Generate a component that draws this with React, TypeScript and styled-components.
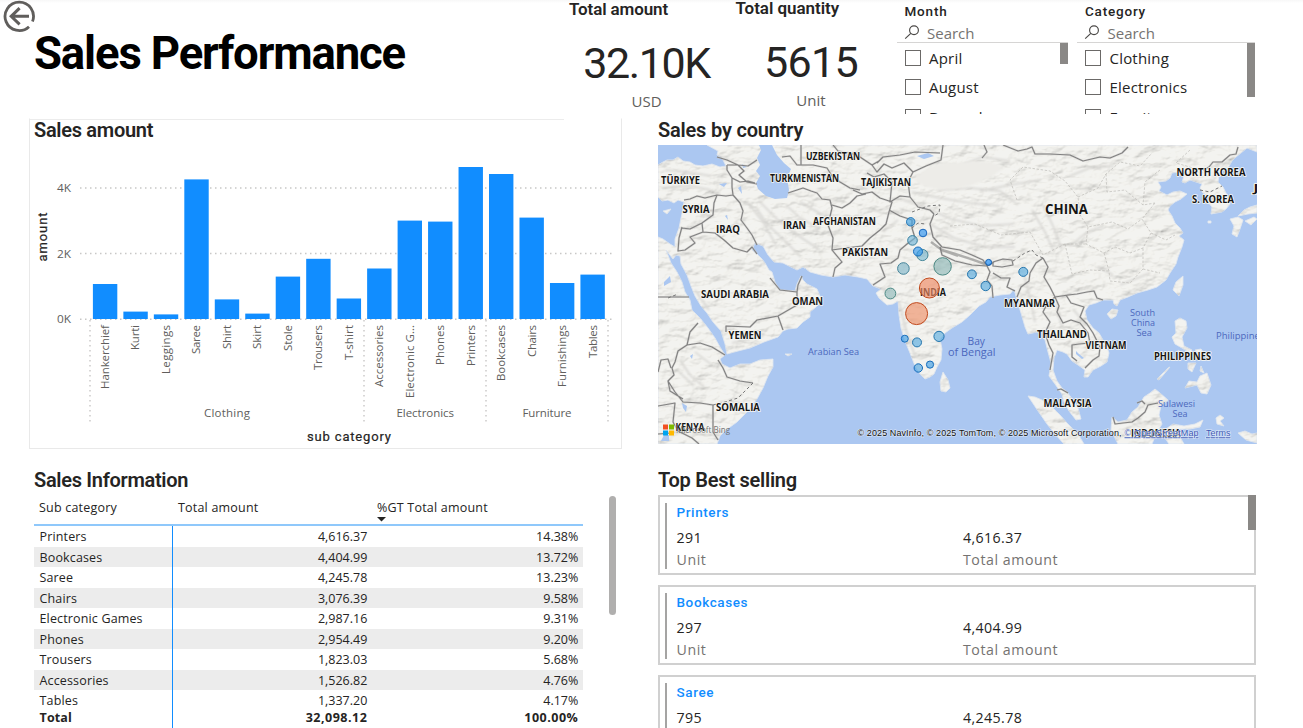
import React from "react";
import styled, { createGlobalStyle } from "styled-components";

const DIN = `Roboto, "Liberation Sans", sans-serif`;
const UI = `"Open Sans", "Noto Sans", sans-serif`;

const Global = createGlobalStyle`
  html, body { margin: 0; background: #fff; overflow: hidden; }
  * { box-sizing: border-box; }
`;

const Page = styled.main`
  position: relative;
  width: 1303px;
  height: 728px;
  overflow: hidden;
  background: linear-gradient(#f7f7f7, #fff 3px);
  color: #252423;
  font-family: ${UI};
`;

const BackButton = styled.svg`
  position: absolute;
  left: 3px;
  top: 0;
  width: 34px;
  height: 33px;
`;

const Header = styled.header`
  display: flex;
  height: 114px;
  overflow: hidden;
`;

const Title = styled.h1`
  margin: 0;
  padding: 26px 0 0 34px;
  width: 569px;
  font: 700 45.5px/56px ${DIN};
  letter-spacing: -1.15px;
  color: #000;
  white-space: nowrap;
`;

const Kpi = styled.section<{ $w: number; $up: number }>`
  width: ${(p) => p.$w}px;
  margin-top: ${(p) => -p.$up}px;
`;

const KpiTitle = styled.h2<{ $ls: number }>`
  margin: 0;
  font: 600 17px/20px ${DIN};
  letter-spacing: ${(p) => p.$ls}px;
  white-space: nowrap;
`;

const KpiValue = styled.div<{ $w: number; $ls: number }>`
  width: ${(p) => p.$w}px;
  padding-top: 17px;
  font: 450 43px/54px ${DIN};
  letter-spacing: ${(p) => p.$ls}px;
  text-align: center;
  white-space: nowrap;
`;

const KpiUnit = styled.div<{ $w: number }>`
  width: ${(p) => p.$w}px;
  font-size: 15px;
  line-height: 23px;
  text-align: center;
  color: #605e5c;
`;

const Slicer = styled.section<{ $w: number; $gap: number }>`
  width: ${(p) => p.$w}px;
  margin-left: ${(p) => p.$gap}px;
`;

const SlicerTitle = styled.h3`
  margin: 0;
  padding: 3px 0 0 8px;
  font: 500 13.5px/17px ${DIN};
  letter-spacing: 0.8px;
`;

const SearchBox = styled.div`
  display: flex;
  align-items: center;
  gap: 6.5px;
  height: 23px;
  padding: 4px 0 0 7px;
  border-bottom: 1px solid #d6d5d4;
  font-size: 15px;
  line-height: 18px;
  color: #757371;
`;

const SlicerBody = styled.div`
  display: flex;
  justify-content: space-between;
`;

const Options = styled.div`
  display: flex;
  flex-direction: column;
  padding: 0 0 0 8px;
`;

const Option = styled.label`
  display: flex;
  align-items: center;
  gap: 8.5px;
  height: 29.5px;
  font-size: 15px;
  letter-spacing: 0.2px;
  white-space: nowrap;
`;

const Box = styled.span`
  width: 16px;
  height: 16px;
  border: 1px solid #6b6967;
`;

const Thumb = styled.i<{ $h: number }>`
  width: 8px;
  height: ${(p) => p.$h}px;
  background: #8a8886;
`;

const Board = styled.div`
  display: grid;
  grid-template-columns: 593px 599px;
  grid-template-rows: 345px auto;
  column-gap: 36px;
  padding: 4px 0 0 29px;
`;

const Panel = styled.section<{ $pad?: number }>`
  padding-left: ${(p) => p.$pad ?? 0}px;
`;

const ChartPanel = styled.section`
  height: 331px;
  border: 1px solid #e9e9e9;
  border-top-color: transparent;
  background: linear-gradient(#ececec, #ececec) 0 0 / 534px 1px no-repeat;
`;

const PanelTitle = styled.h2<{ $x?: number; $y?: number; $ls?: number }>`
  margin: 0;
  padding: ${(p) => p.$y ?? 0}px 0 0 ${(p) => p.$x ?? 0}px;
  font: 600 20px/24px ${DIN};
  letter-spacing: ${(p) => p.$ls ?? -0.3}px;
  white-space: nowrap;
`;

const ChartTitle = styled(PanelTitle)`
  margin-top: -1px;
`;

const Plot = styled.svg`
  display: block;
  margin-top: 2px;
  font-family: ${UI};
`;

const MapCanvas = styled.svg`
  display: block;
  margin-top: 3px;
`;

const TableArea = styled.div`
  display: flex;
  justify-content: space-between;
  width: 582px;
`;

const Table = styled.div`
  width: 549px;
  font-size: 12.5px;
  line-height: 20px;
`;

const HeadRow = styled.div`
  display: grid;
  grid-template-columns: 138px 200px 211px;
  height: 34px;
  padding-top: 6px;
  border-bottom: 2px solid #8fc8fb;
`;

const Head = styled.div<{ $x?: number }>`
  padding-left: ${(p) => p.$x ?? 5}px;
  letter-spacing: 0.2px;
  white-space: nowrap;
`;

const SortMark = styled.svg`
  display: block;
  margin-top: -1px;
`;

const Row = styled.div<{ $alt?: boolean; $total?: boolean }>`
  display: grid;
  grid-template-columns: 139px 199px 211px;
  height: ${(p) => (p.$total ? 24 : 20.5)}px;
  margin-top: ${(p) => (p.$total ? -3.5 : 0)}px;
  line-height: 21px;
  font-weight: ${(p) => (p.$total ? 700 : 400)};
  letter-spacing: ${(p) => (p.$total ? 0.5 : 0)}px;
  background: ${(p) => (p.$alt ? "#ececec" : "transparent")};
`;

const NameCell = styled.div`
  padding-left: 5.5px;
  border-right: 1px solid #118dff;
  letter-spacing: 0.15px;
  white-space: nowrap;
`;

const NumCell = styled.div`
  padding-right: 4.7px;
  text-align: right;
`;

const TableThumb = styled.i`
  width: 7px;
  height: 119px;
  margin-top: 4px;
  border-radius: 4px;
  background: #b0afae;
`;

const CardList = styled.div`
  position: relative;
  display: flex;
  flex-direction: column;
  gap: 10px;
  padding-top: 3px;
`;

const ListThumb = styled.i`
  position: absolute;
  top: 3px;
  right: 1px;
  width: 8px;
  height: 35px;
  background: #8a8886;
`;

const Card = styled.article`
  height: 80px;
  width: 598px;
  padding: 6px 0 0 5px;
  border: 2px solid #d0d0d0;
`;

const CardInner = styled.div`
  height: 66px;
  border-left: 2px solid #a5a4a3;
  padding-left: 9.5px;
`;

const CardName = styled.h3`
  margin: 0;
  font: 500 13.5px/18px ${DIN};
  letter-spacing: 0.6px;
  color: #118dff;
`;

const CardGrid = styled.div`
  display: grid;
  grid-template-columns: 286.5px auto;
  padding-top: 6px;
  font-size: 14.2px;
  line-height: 22px;
  letter-spacing: 0.4px;
`;

const Muted = styled.span`
  letter-spacing: 0.55px;
  color: #757371;
`;

const bars: [string, number][] = [
  ["Hankerchief", 284], ["Kurti", 311.6], ["Leggings", 314.4], ["Saree", 179.4],
  ["Shirt", 299.4], ["Skirt", 313.6], ["Stole", 276.6], ["Trousers", 258.8],
  ["T-shirt", 298.5], ["Accessories", 268.5], ["Electronic G...", 220.6],
  ["Phones", 221.6], ["Printers", 167], ["Bookcases", 174], ["Chairs", 217.6],
  ["Furnishings", 283], ["Tables", 274.6],
];
const barLabelLengths = [64, 25, 49, 29, 24, 24, 26, 45, 35, 62, 73, 40, 41, 56, 32, 62, 33];

const Chart = () => (
  <Plot width="591" height="303" viewBox="30 144 591 303">
    <g stroke="#c8c7c6" strokeDasharray="1.5 3.5" strokeWidth="1.4">
      {[188, 253.5, 319.3].map((y) => (
        <path key={y} d={`M80 ${y}H613`} />
      ))}
      {[90, 364, 486, 608].map((x) => (
        <path key={x} d={`M${x} 320V424`} />
      ))}
    </g>
    <g fontSize="11.5" fill="#605e5c">
      {([["4K", 192], ["2K", 257.5], ["0K", 323]] as [string, number][]).map(([t, y]) => (
        <text key={t} x="71" y={y} textAnchor="end" textLength="14" lengthAdjust="spacingAndGlyphs">{t}</text>
      ))}
      {bars.map(([name, top], i) => (
        <React.Fragment key={name}>
          <rect x={92.9 + i * 30.47} y={top} width="24.4" height={319 - top} fill="#118dff" />
          <text
            transform={`translate(${109 + i * 30.47} 325) rotate(-90)`}
            textAnchor="end"
            textLength={barLabelLengths[i]}
          >{name}</text>
        </React.Fragment>
      ))}
      <text x="204" y="417" textLength="46">Clothing</text>
      <text x="396.5" y="417" textLength="57.5">Electronics</text>
      <text x="522.5" y="417" textLength="49">Furniture</text>
    </g>
    <g fontFamily={DIN} fontWeight="450" fontSize="13" fill="#252423" stroke="#252423" strokeWidth="0.2">
      <text x="307" y="441" textLength="84">sub category</text>
      <text transform="translate(47 261.5) rotate(-90)" textLength="49">amount</text>
    </g>
  </Plot>
);

const mainland =
  "M658 165L663 162 667 160 673 160 678 157 683 161 690 162 695 165 703 166 712 164 720 167 726 166 722 158 717 155 718 151 707 145H1257V152L1252 150 1247 148 1241 153 1236 157 1232 161 1228 168 1222 171 1219 175 1218 182 1223 187 1227 195 1230 204 1226 209 1222 212 1211 214 1212 207 1208 202 1210 197 1203 193 1200 188 1202 184 1196 182 1190 180 1185 183 1182 182 1184 176 1179 172 1172 173 1170 178 1166 181 1158 182 1161 187 1159 191 1167 195 1173 192 1180 191 1187 194 1181 199 1175 202 1170 206 1168 210 1172 216 1175 223 1180 228 1183 233 1179 236 1184 240 1182 247 1178 257 1176 264 1170 273 1166 280 1157 287 1148 290 1137 293 1128 297 1120 300 1117 306 1114 304 1113 300 1103 300 1096 303 1089 305 1085 311 1087 320 1093 328 1099 333 1103 340 1107 347 1109 353 1107 362 1101 366 1093 370 1088 377 1084 377 1085 370 1078 365 1072 361 1067 354 1063 352 1057 350 1054 358 1053 370 1057 381 1062 388 1067 392 1073 400 1078 408 1081 419 1076 420 1069 411 1064 402 1062 394 1055 384 1049 376 1051 363 1048 352 1045 340 1043 330 1037 332 1028 334 1025 327 1021 313 1017 300 1014 289 1010 294 1000 295 990 297 986 302 979 306 970 315 962 322 952 328 945 333 940 339 942 349 941 360 937 367 934 374 930 377 925 379 920 374 915 366 910 353 905 341 901 328 899 315 898 301 893 304 887 305 879 298 876 293 881 289 873 286 867 279 858 277 845 275 833 277 821 275 810 272 803 267 797 270 783 263 774 262 768 255 763 246 755 243 752 250 757 254 762 259 765 263 769 270 772 272 775 282 779 290 795 291 797 284 801 276 803 280 807 284 817 289 822 301 816 307 810 312 810 317 803 322 797 328 788 329 783 331 778 337 764 342 750 348 738 351 727 354 725 344 721 331 713 322 707 313 701 306 695 296 691 286 687 275 681 264 680 256 676 255 673 259 666 250 671 263 677 272 682 282 685 292 690 300 692 310 700 318 708 328 715 338 720 347 725 355 720 359 722 364 730 368 740 364 750 364 760 360 773 359 773 367 768 376 763 388 757 399 748 411 737 422 726 430 720 436 717 444H658V237L663 239 670 244 675 247 675 239 679 228 681 218 683 209 684 202 678 200 674 203 668 200 662 201 658 197Z";

const islands =
  "M1028 396L1035 397 1042 400 1052 407 1060 415 1067 423 1078 434 1084 444H1064L1055 434 1047 424 1038 411Z" +
  "M1112 417L1118 422 1127 420 1132 412 1138 407 1144 397 1150 393 1155 389 1160 393 1168 400 1161 406 1159 415 1162 424 1156 434 1152 444H1118L1111 430Z" +
  "M1166 429L1173 424 1184 426 1195 424 1203 420 1200 427 1190 429 1176 429 1172 433 1185 433 1180 437 1184 444H1169L1165 438Z" +
  "M1220 415L1224 418 1220 421 1224 426 1217 424 1216 418ZM1238 433L1245 431 1252 434 1257 433V443L1246 440Z" +
  "M1175 321L1180 318 1186 321 1187 328 1182 337 1184 346 1192 350 1190 353 1182 348 1175 344 1172 337 1176 333Z" +
  "M1185 388L1189 381 1197 382 1200 376 1207 373 1211 385 1207 394 1201 393 1197 385Z" +
  "M1195 350L1201 349 1206 356 1202 358ZM1188 363L1196 363 1192 372 1188 369ZM1201 366L1204 373 1200 371ZM1157 379L1168 368 1170 367 1159 380ZM1178 350L1183 354 1180 357Z" +
  "M1183 276L1183 285 1179 296 1173 290 1176 282ZM1107 314L1112 309 1118 310 1116 316 1111 319Z" +
  "M943 372L948 380 950 388 946 392 941 391 940 382Z" +
  "M1230 219L1238 217 1243 220 1240 229 1237 237 1232 234 1234 226ZM1238 216L1244 210 1250 207 1257 205V213L1248 214ZM1245 221L1254 217 1257 219 1251 225Z" +
  "M663 211L671 209 667 214ZM785 354L792 354 788 356ZM1208 221h3v2h-3Z";

const water =
  "M759 145L761 150 757 158 760 165 756 171 760 176 756 183 758 189 766 196 775 199 787 198 789 190 787 178 791 169 784 163 777 155 772 145ZM917 156L928 153 934 156 924 159ZM719 184l8-1-3 4ZM738 188l3-2 1 8ZM725 216l2-1 1 5ZM682 403l5 3-1 6-3-4ZM664 282l6-6 1 6-7 4ZM1076 351l3 3 5 4-2 1-6-5ZM805 268l3 4-3 1ZM742 164l5 3-4 1ZM690 356l3-2-1 5ZM664 435h5v6h-8Z";

const borders =
  "M684 200L690 199 697 196 705 198 717 195 726 196 733 195 732 187 732 178 727 170 727 165M717 157L727 160 738 165 748 166 757 160M727 165L738 165 744 171 739 175 747 182 757 184M732 178L740 182 748 181 755 183M733 195L740 203 743 211 741 220 747 228 752 235 757 245M717 195L714 203 713 215 702 223 690 229 682 228M702 223L703 232 715 233 724 240 733 248 747 252 752 247 757 254M703 232L690 237 695 243 685 250 678 251 679 238 682 227M770 278L775 284 780 290 797 292 798 285 802 276M797 292L797 305 778 316 757 320 750 327 726 326 726 332M778 316L783 330" +
  "M658 297H689M698 323L690 332 687 345 678 351 675 362 672 368 674 375 668 381 675 392 683 402 700 403 713 405 713 432 718 440M687 345L700 343 712 347 725 355M718 360L723 368 727 377 740 381 753 383M658 372L661 360 668 359 671 368M658 406L675 403 673 422 678 431 692 438 699 444M658 434L672 433M668 381L670 391 683 399" +
  "M788 193L803 188 811 191 817 193 822 199 830 200 832 208 828 225 833 238 832 250 842 262 835 268 833 277M782 157L790 156 797 165 813 165 827 168 832 176 840 182 850 188 860 190M832 205L842 208 850 203 857 196 866 194M801 145V165M833 145L838 151 850 153 860 157 872 165 879 161M832 250L846 248 862 246 870 238 880 230 886 224 889 212 892 202 880 198 872 192 862 194 853 190M867 173L874 177 884 174 892 182 890 202 900 196 910 197M872 165L877 172 884 164 892 168 904 163 913 172M877 163L883 157 900 155 915 152 940 153M943 145L941 160 926 166 913 172 908 182 910 197 918 207 930 210 934 214" +
  "M889 210L900 216 912 220 912 228 915 238 907 244 900 250 898 258 891 263 880 264 885 277 873 285M934 214L930 224 933 237 942 247 960 250 972 255 983 260 987 266 972 265 955 261 942 255 940 247M993 262L1003 259 1012 260 1013 265 1002 267 993 266ZM987 266L990 272 987 280 992 286 993 298M993 273L1001 278 1010 278 1007 287 1015 291M1030 273L1036 263 1043 258M1030 273L1029 281 1021 287 1017 297M987 266L994 262" +
  "M1043 258L1048 267 1044 277 1050 287 1055 297 1068 295 1077 294 1087 292 1094 291 1097 298 1103 300M1055 297L1047 304 1043 312 1050 322 1045 333 1049 345 1053 353 1050 370M1055 297L1059 306 1057 312 1063 323 1071 320 1080 323 1088 333 1090 343 1079 344 1072 345 1072 357 1077 361M1066 295L1071 303 1084 307 1080 317 1087 324 1093 333 1100 347 1099 356 1093 360 1085 368M1057 390L1061 389 1068 393" +
  "M1113 417L1115 424 1123 423 1132 422 1138 418 1145 412 1148 405 1158 403M1137 403l5-2 3 3M1003 145L1018 151 1027 149 1032 147 1035 154 1050 154 1070 155 1083 161 1100 157 1110 158 1122 153 1128 147M1203 170L1209 167 1213 162 1222 162 1230 155 1236 154 1238 147M984 145l3 7-5 6";

const ridges =
  "M760 202L778 220 797 235 820 250M756 208L768 225 784 240 801 257M786 205L800 218 820 229M748 203L763 222 776 245M800 202L821 214M665 170L688 172 711 176M662 188L690 186 711 190M883 232L898 220M912 192L940 198 970 203 1000 206M930 224L954 238 985 247 1015 247M920 205L951 219 981 226 1014 224M980 191L1010 185 1041 180M937 190L970 188 1000 191 1018 205M1032 210L1045 232 1054 252M1043 205L1054 228 1062 250M1070 176L1092 167 1114 166M1070 246L1085 234 1103 226M1098 267L1113 275M1120 285L1150 273M899 302L906 330 915 356M903 200L925 207M680 360L690 375 705 388M677 370L694 386M695 352L712 365M950 170L982 157 1010 161M1024 275L1031 302 1035 322M1056 305L1062 327M1073 309L1087 326M695 290L709 310M732 343L764 335M1125 405L1142 425";

const provinces =
  "M1017 200L1010 180 1023 167 1050 171 1065 181 1078 197 1080 215 1088 227 1112 222 1128 229 1142 219M1078 197L1098 188 1106 174 1120 162 1140 166 1152 153M1106 174L1107 192 1125 190 1143 205 1155 203M1088 227L1086 244 1104 253 1115 247 1130 253 1143 248 1151 233 1142 219 1155 203M1104 253L1109 271 1110 281 1130 283 1143 269 1143 248M1143 269L1160 273M1151 233L1166 240 1175 235M950 226L975 224 1001 235 1030 232 1043 255 1065 244 1086 244M1065 244L1072 274 1090 270 1109 271M1160 170L1145 182 1143 205M1190 150L1176 163 1200 170";

const countries: [string, number, number, number, number?][] = [
  ["TÜRKIYE", 661, 183.5, 39], ["SYRIA", 682.5, 212.5, 27], ["IRAQ", 716, 232.5, 24],
  ["IRAN", 783, 228.5, 23], ["UZBEKISTAN", 806, 159.5, 54], ["TURKMENISTAN", 770, 181.5, 69],
  ["TAJIKISTAN", 861, 185.5, 50], ["AFGHANISTAN", 813, 225, 63], ["PAKISTAN", 842, 255.5, 46],
  ["SAUDI ARABIA", 701, 298, 68], ["OMAN", 792, 304.5, 31], ["YEMEN", 728.5, 339, 33],
  ["SOMALIA", 716, 411, 44], ["KENYA", 675.5, 431, 29], ["INDIA", 920, 295.5, 26],
  ["CHINA", 1045, 214, 43, 13.5], ["MYANMAR", 1004, 306.5, 51], ["THAILAND", 1037, 337.5, 50],
  ["VIETNAM", 1085.5, 349, 41], ["MALAYSIA", 1043.5, 407, 48], ["PHILIPPINES", 1154, 359.5, 57],
  ["NORTH KOREA", 1176.5, 175.5, 69], ["S. KOREA", 1192, 202.5, 42], ["J", 1253.5, 192, 5],
  ["INDONESIA", 1131, 437, 50],
];

const seas: [string, number, number, number, number][] = [
  ["Arabian Sea", 808, 355, 51, 9.5], ["Bay", 967.5, 344.5, 17.5, 10.5],
  ["of Bengal", 948, 356, 47.5, 10.5], ["South", 1130, 316, 25, 9.2],
  ["China", 1131, 326, 24, 9.2], ["Sea", 1136.5, 336, 15.5, 9.2],
  ["Sulawesi", 1158, 406.5, 37, 9.2], ["Sea", 1172.5, 417, 15, 9.2],
  ["Philippine Sea", 1216, 338.5, 62, 9.2],
];

const bubbles: [number, number, number, string, string][] = [
  [910.7, 221.8, 4.2, "#3fa1e4", "#2478b8"], [923, 233, 3.8, "#2a91ee", "#1565bd"],
  [912.5, 240.4, 4.8, "#73b6d8", "#37809f"], [922.4, 255, 5.6, "#7db8cf", "#458698"],
  [918, 251.5, 4.5, "#3399ee", "#176dbb"], [903.4, 268.5, 5.8, "#83b7c9", "#438399"],
  [942.6, 266.4, 8.7, "#8fb8b8", "#4b8883"], [988.6, 262.4, 3, "#168dff", "#125cad"],
  [971.9, 274.3, 4.4, "#57aadf", "#2475ad"], [985.7, 286, 4.7, "#57aadf", "#2475ad"],
  [1023.3, 271.9, 4.5, "#57aadf", "#2475ad"], [890.4, 293.5, 5.4, "#8fb8b8", "#4b8883"],
  [929.4, 288, 10, "#ee8963", "#c04a1e"], [916.6, 313.6, 11, "#ee9068", "#c04a1e"],
  [904.8, 338.7, 3.5, "#429fe5", "#176dbb"], [917, 342.4, 4.5, "#57aadf", "#2475ad"],
  [939, 336.4, 5.1, "#5daddf", "#2475ad"], [918.3, 368, 4.2, "#53a6e0", "#176dbb"],
  [930, 364.6, 3.6, "#429fe5", "#176dbb"],
];

const WorldMap = () => (
  <MapCanvas width="599" height="299" viewBox="658 145 599 299" fontFamily={UI}>
    <defs>
      <clipPath id="land"><path d={mainland + islands} /></clipPath>
      <filter id="relief" x="0" y="0" width="100%" height="100%">
        <feTurbulence type="fractalNoise" baseFrequency="0.05 0.09" numOctaves="4" seed="8" />
        <feDiffuseLighting surfaceScale="5" lightingColor="#fffdf8" diffuseConstant="1.22">
          <feDistantLight azimuth="235" elevation="52" />
        </feDiffuseLighting>
      </filter>
      <filter id="soft"><feGaussianBlur stdDeviation="0.9" /></filter>
    </defs>
    <rect x="658" y="145" width="599" height="299" fill="#abc7f1" />
    <path d={mainland + islands} fill="#f0efeb" stroke="#d9e2ee" strokeWidth="1" />
    <g clipPath="url(#land)">
      <rect x="658" y="145" width="599" height="299" filter="url(#relief)" opacity="0.24" />
      <path d={ridges} fill="none" stroke="#d3d2cf" strokeWidth="1.5" filter="url(#soft)" />
      <path d="M914 180Q928 161 959 163 990 158 1004 168 979 186 957 188 930 193 914 180Z" fill="#edece8" filter="url(#soft)" />
    </g>
    <path d={water} fill="#abc7f1" />
    <g fill="none" strokeLinejoin="round">
      <path d={borders} stroke="#c9c8c5" strokeWidth="2.2" opacity="0.5" />
      <path d={borders} stroke="#828282" strokeWidth="1.15" />
      <path d="M942 250Q966 257 985 264M931 242L942 250 958 256" stroke="#777" strokeWidth="2.4" opacity="0.55" />
      <path d="M753 383L738 398 725 402 713 405M912 212L928 206 940 205 939 213 934 216M1013 261L1025 253 1032 250 1036 255 1043 258M1200 190L1210 192 1222 186M668 298l10-4M912 228l6-5 7 1" stroke="#777" strokeDasharray="3 2.5" />
      <path d={provinces} stroke="#bdbcb8" strokeWidth="0.7" strokeDasharray="2.5 1.6" />
    </g>
    <g fill="#4b68bd">
      {seas.map(([t, x, y, w, s]) => (
        <text key={t + y} x={x} y={y} fontSize={s} textLength={w} lengthAdjust="spacingAndGlyphs">{t}</text>
      ))}
    </g>
    <g fontWeight="700" fill="#151515" stroke="#f7f7f4" strokeWidth="1.6" strokeLinejoin="round" paintOrder="stroke">
      {countries.map(([t, x, y, w, s = 9.9]) => (
        <text key={t} x={x} y={y} fontSize={s} textLength={w} lengthAdjust="spacingAndGlyphs">{t}</text>
      ))}
    </g>
    {bubbles.map(([x, y, r, fill, line]) => (
      <circle key={`${x}-${y}`} cx={x} cy={y} r={r} fill={fill} fillOpacity="0.65" stroke={line} strokeWidth="1" />
    ))}
    <rect x="663" y="424.5" width="5" height="5" fill="#f25022" />
    <rect x="669" y="424.5" width="5" height="5" fill="#7fba00" />
    <rect x="663" y="430.5" width="5" height="5" fill="#00a4ef" />
    <rect x="669" y="430.5" width="5" height="5" fill="#ffb900" />
    <text x="676" y="433" fontSize="8.5" textLength="54" lengthAdjust="spacingAndGlyphs" fill="#666" fillOpacity="0.9">Microsoft Bing</text>
    <g fontFamily="Liberation Sans, sans-serif" fontSize="9" fill="#111" stroke="#f4f6fa" strokeWidth="1.2" strokeOpacity="0.7" paintOrder="stroke">
      <text x="857.5" y="436.3" textLength="264">© 2025 NavInfo, © 2025 TomTom, © 2025 Microsoft Corporation,</text>
      <text x="1124.5" y="436.3" textLength="74" fill="#3a57b5" textDecoration="underline">© OpenStreetMap</text>
      <text x="1206" y="436.3" textLength="24.5" fill="#3a57b5" textDecoration="underline">Terms</text>
    </g>
  </MapCanvas>
);

const SearchIcon = () => (
  <svg width="17" height="16" viewBox="0 0 17 16" fill="none" stroke="#4a4846" strokeWidth="1.15">
    <circle cx="10" cy="5.2" r="4.4" />
    <path d="M6.8 8.4L1.2 13.6" />
  </svg>
);

const SlicerCard = ({ title, options, w, gap, thumb }: { title: string; options: string[]; w: number; gap: number; thumb: number }) => (
  <Slicer $w={w} $gap={gap}>
    <SlicerTitle>{title}</SlicerTitle>
    <SearchBox><SearchIcon />Search</SearchBox>
    <SlicerBody>
      <Options>
        {options.map((o) => <Option key={o}><Box />{o}</Option>)}
      </Options>
      <Thumb $h={thumb} />
    </SlicerBody>
  </Slicer>
);

const rows = [
  ["Printers", "4,616.37", "14.38%"], ["Bookcases", "4,404.99", "13.72%"],
  ["Saree", "4,245.78", "13.23%"], ["Chairs", "3,076.39", "9.58%"],
  ["Electronic Games", "2,987.16", "9.31%"], ["Phones", "2,954.49", "9.20%"],
  ["Trousers", "1,823.03", "5.68%"], ["Accessories", "1,526.82", "4.76%"],
  ["Tables", "1,337.20", "4.17%"],
];

const best = [
  ["Printers", "291", "4,616.37"], ["Bookcases", "297", "4,404.99"], ["Saree", "795", "4,245.78"],
];

export default function App() {
  return (
    <Page>
      <Global />
      <Header>
        <Title>Sales Performance</Title>
        <Kpi $w={166.5} $up={1}>
          <KpiTitle $ls={-0.12}>Total amount</KpiTitle>
          <KpiValue $w={155} $ls={-1.4}>32.10K</KpiValue>
          <KpiUnit $w={155}>USD</KpiUnit>
        </Kpi>
        <Kpi $w={161} $up={2}>
          <KpiTitle $ls={-0.05}>Total quantity</KpiTitle>
          <KpiValue $w={151} $ls={-0.7}>5615</KpiValue>
          <KpiUnit $w={151}>Unit</KpiUnit>
        </Kpi>
        <SlicerCard title="Month" options={["April", "August", "December"]} w={171} gap={0} thumb={21} />
        <SlicerCard title="Category" options={["Clothing", "Electronics", "Furniture"]} w={178} gap={9.5} thumb={54} />
      </Header>
      <BackButton viewBox="3 0 34 33" fill="none" stroke="#605e5c">
        <path d="M29 26.7A14.2 14.2 0 1 1 32.5 21.5" strokeWidth="2.8" />
        <path d="M29 16.3H11M19.6 8.2L11.2 16.3 19.6 24.4" strokeWidth="3" />
      </BackButton>
      <Board>
        <ChartPanel>
          <ChartTitle $x={4}>Sales amount</ChartTitle>
          <Chart />
        </ChartPanel>
        <Panel>
          <PanelTitle $ls={-0.2}>Sales by country</PanelTitle>
          <WorldMap />
        </Panel>
        <Panel $pad={5}>
          <PanelTitle $y={5}>Sales Information</PanelTitle>
          <TableArea>
            <Table>
              <HeadRow>
                <Head>Sub category</Head>
                <Head $x={6}>Total amount</Head>
                <Head>
                  %GT Total amount
                  <SortMark width="9" height="5" viewBox="0 0 9 5"><path d="M0 0H9L4.5 4.5Z" fill="#252423" /></SortMark>
                </Head>
              </HeadRow>
              {rows.map(([a, b, c], i) => (
                <Row key={a} $alt={i % 2 === 1}>
                  <NameCell>{a}</NameCell><NumCell>{b}</NumCell><NumCell>{c}</NumCell>
                </Row>
              ))}
              <Row $total>
                <NameCell>Total</NameCell><NumCell>32,098.12</NumCell><NumCell>100.00%</NumCell>
              </Row>
            </Table>
            <TableThumb />
          </TableArea>
        </Panel>
        <Panel>
          <PanelTitle $y={5} $ls={-0.25}>Top Best selling</PanelTitle>
          <CardList>
            {best.map(([name, units, amount]) => (
              <Card key={name}>
                <CardInner>
                  <CardName>{name}</CardName>
                  <CardGrid>
                    <span>{units}</span><span>{amount}</span>
                    <Muted>Unit</Muted><Muted>Total amount</Muted>
                  </CardGrid>
                </CardInner>
              </Card>
            ))}
            <ListThumb />
          </CardList>
        </Panel>
      </Board>
    </Page>
  );
}
